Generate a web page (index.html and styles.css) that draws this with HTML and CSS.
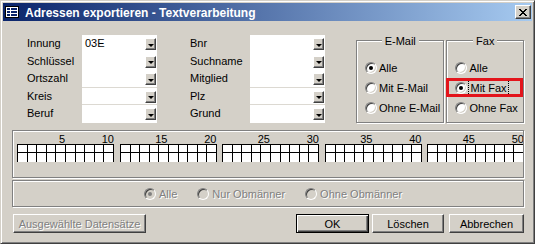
FILE: index.html
```html
<!DOCTYPE html>
<html lang="de">
<head>
    <meta charset="UTF-8">
    <title>Adressen exportieren - Textverarbeitung</title>
    <link rel="stylesheet" href="styles.css">
</head>
<body>
<div class="window">
    <div class="titlebar">
        <svg class="app-icon" width="16" height="16" viewBox="0 0 16 16">
            <rect x="1.5" y="2.5" width="13" height="11" fill="#fff" stroke="#000"/>
            <path d="M3 4h3v2H3zM7 4h6v2H7zM3 7h3v2H3zM7 7h6v2H7zM3 10h3v2H3zM7 10h6v2H7z" fill="#0a246a"/>
        </svg>
        <span class="title">Adressen exportieren - Textverarbeitung</span>
        <div class="close">
            <svg width="8" height="7" viewBox="0 0 8 7" shape-rendering="crispEdges">
                <path d="M0 0h2v1H0zM6 0h2v1H6zM1 1h2v1H1zM5 1h2v1H5zM2 2h4v1H2zM3 3h2v1H3zM2 4h4v1H2zM1 5h2v1H1zM5 5h2v1H5zM0 6h2v1H0zM6 6h2v1H6z" fill="#000"/>
            </svg>
        </div>
    </div>

    <div class="content">
        <div class="top">
            <div class="fields">
                <span class="label">Innung</span>
                <div class="combo"><span class="value">03E</span><span class="drop"></span></div>
                <span class="label">Schlüssel</span>
                <div class="combo"><span class="value"></span><span class="drop"></span></div>
                <span class="label">Ortszahl</span>
                <div class="combo sep"><span class="value"></span><span class="drop"></span></div>
                <span class="label">Kreis</span>
                <div class="combo sep"><span class="value"></span><span class="drop"></span></div>
                <span class="label">Beruf</span>
                <div class="combo"><span class="value"></span><span class="drop"></span></div>
            </div>

            <div class="fields fields-2">
                <span class="label">Bnr</span>
                <div class="combo"><span class="value"></span><span class="drop"></span></div>
                <span class="label">Suchname</span>
                <div class="combo"><span class="value"></span><span class="drop"></span></div>
                <span class="label">Mitglied</span>
                <div class="combo sep"><span class="value"></span><span class="drop"></span></div>
                <span class="label">Plz</span>
                <div class="combo sep"><span class="value"></span><span class="drop"></span></div>
                <span class="label">Grund</span>
                <div class="combo"><span class="value"></span><span class="drop"></span></div>
            </div>

            <div class="group group-email">
                <div class="group-title"><span>E-Mail</span></div>
                <div class="option"><span class="radio checked"></span><span>Alle</span></div>
                <div class="option"><span class="radio"></span><span>Mit E-Mail</span></div>
                <div class="option"><span class="radio"></span><span>Ohne E-Mail</span></div>
            </div>

            <div class="group group-fax">
                <div class="group-title"><span>Fax</span></div>
                <div class="option"><span class="radio"></span><span>Alle</span></div>
                <div class="option"><span class="radio checked"></span><span class="focus">Mit Fax</span></div>
                <div class="option"><span class="radio"></span><span>Ohne Fax</span></div>
                <div class="highlight"></div>
            </div>
        </div>

        <div class="rulers">
            <div class="ruler">
                <div class="ruler-labels"><span>5</span><span>10</span></div>
                <svg width="97" height="18"><rect width="97" height="18" fill="#fff"/><path d="M0 .5H97M0 8.5H97M.5 0V18M10.5 0V18M19.5 0V18M29.5 0V18M38.5 0V18M48.5 0V18M58.5 0V18M67.5 0V18M77.5 0V18M86.5 0V18M96.5 0V18" stroke="#000"/></svg>
            </div>
            <div class="ruler">
                <div class="ruler-labels"><span>15</span><span>20</span></div>
                <svg width="97" height="18"><rect width="97" height="18" fill="#fff"/><path d="M0 .5H97M0 8.5H97M.5 0V18M10.5 0V18M19.5 0V18M29.5 0V18M38.5 0V18M48.5 0V18M58.5 0V18M67.5 0V18M77.5 0V18M86.5 0V18M96.5 0V18" stroke="#000"/></svg>
            </div>
            <div class="ruler">
                <div class="ruler-labels"><span>25</span><span>30</span></div>
                <svg width="97" height="18"><rect width="97" height="18" fill="#fff"/><path d="M0 .5H97M0 8.5H97M.5 0V18M10.5 0V18M19.5 0V18M29.5 0V18M38.5 0V18M48.5 0V18M58.5 0V18M67.5 0V18M77.5 0V18M86.5 0V18M96.5 0V18" stroke="#000"/></svg>
            </div>
            <div class="ruler">
                <div class="ruler-labels"><span>35</span><span>40</span></div>
                <svg width="97" height="18"><rect width="97" height="18" fill="#fff"/><path d="M0 .5H97M0 8.5H97M.5 0V18M10.5 0V18M19.5 0V18M29.5 0V18M38.5 0V18M48.5 0V18M58.5 0V18M67.5 0V18M77.5 0V18M86.5 0V18M96.5 0V18" stroke="#000"/></svg>
            </div>
            <div class="ruler">
                <div class="ruler-labels"><span>45</span><span>50</span></div>
                <svg width="97" height="18"><rect width="97" height="18" fill="#fff"/><path d="M0 .5H97M0 8.5H97M.5 0V18M10.5 0V18M19.5 0V18M29.5 0V18M38.5 0V18M48.5 0V18M58.5 0V18M67.5 0V18M77.5 0V18M86.5 0V18M96.5 0V18" stroke="#000"/></svg>
            </div>
        </div>

        <div class="obm">
            <div class="option"><span class="radio off checked"></span><span class="dim">Alle</span></div>
            <div class="option"><span class="radio off"></span><span class="dim">Nur Obmänner</span></div>
            <div class="option"><span class="radio off"></span><span class="dim">Ohne Obmänner</span></div>
        </div>

        <div class="actions">
            <button class="btn btn-selected dim">Ausgewählte Datensätze</button>
            <button class="btn btn-ok">OK</button>
            <button class="btn btn-clear">Löschen</button>
            <button class="btn btn-cancel">Abbrechen</button>
        </div>
    </div>
</div>
</body>
</html>
```

FILE: styles.css
```css
body {
    margin: 0;
    font: 11px "Liberation Sans", Arial, sans-serif;
    color: #000;
    background: #d4d0c8;
}

.window {
    width: 535px;
    height: 244px;
    box-sizing: border-box;
    border: 1px solid;
    border-color: #d4d0c8 #404040 #404040 #d4d0c8;
    box-shadow: inset 1px 1px #fff, inset -1px -1px #808080;
    padding: 2px;
    background: #d4d0c8;
    display: flex;
    flex-direction: column;
}

/* title bar */
.titlebar {
    height: 18px;
    flex: none;
    display: flex;
    align-items: center;
    background: linear-gradient(to right, #0a246a, #a6caf0);
    color: #fff;
}

.app-icon {
    margin-left: 1px;
    margin-right: 5px;
}

.title {
    font-weight: bold;
    font-size: 12px;
    padding-top: 1px;
}

.close {
    margin-left: auto;
    margin-right: 1px;
    width: 16px;
    height: 14px;
    box-sizing: border-box;
    border: 1px solid;
    border-color: #fff #404040 #404040 #fff;
    box-shadow: inset -1px -1px #808080;
    background: #d4d0c8;
    display: flex;
    align-items: center;
    justify-content: center;
}

.content {
    flex: 1;
    padding: 0 8px 0 9px;
    display: flex;
    flex-direction: column;
}

/* combo fields */
.top {
    display: flex;
    align-items: flex-start;
    margin-top: 14px;
}

.fields {
    display: grid;
    grid-template-columns: 55px 75px;
    grid-auto-rows: 17.5px;
    margin-left: 15px;
}

.fields-2 {
    grid-template-columns: 60px 75px;
    margin-left: 33px;
}

.label {
    line-height: 17.5px;
}

.combo {
    background: #fff;
    display: flex;
    align-items: flex-start;
}

.combo.sep {
    box-shadow: inset 0 -1px #dcd9d2;
}

.value {
    flex: 1;
    padding-left: 3px;
    line-height: 17.5px;
}

.drop {
    width: 11px;
    height: 12px;
    margin: 3px 1px 0 0;
    box-sizing: border-box;
    border: 1px solid;
    border-color: #fff #404040 #404040 #fff;
    box-shadow: inset -1px -1px #808080;
    background: #d4d0c8;
    display: flex;
    align-items: center;
    justify-content: center;
    padding-top: 2px;
}

.drop::after {
    content: "";
    width: 0;
    height: 0;
    border-left: 3px solid transparent;
    border-right: 3px solid transparent;
    border-top: 3px solid #000;
}

/* option groups */
.group {
    position: relative;
    margin-top: 5px;
    height: 83px;
    box-sizing: border-box;
    border: 1px solid #808080;
    box-shadow: inset 1px 1px #fff, 1px 1px #fff;
    padding: 16.5px 0 0 8px;
}

.group-email {
    width: 89px;
    margin-left: 31px;
}

.group-fax {
    width: 78px;
    margin-left: 2px;
}

.group-title {
    position: absolute;
    top: -6px;
    left: 0;
    right: 0;
    text-align: center;
    line-height: 12px;
}

.group-title span {
    background: #d4d0c8;
    padding: 0 3px;
}

.option {
    display: flex;
    align-items: center;
    gap: 2px;
    height: 20px;
}

.radio {
    flex: none;
    width: 12px;
    height: 12px;
    box-sizing: border-box;
    border-radius: 50%;
    border: 1px solid;
    border-color: #808080 #fff #fff #808080;
    box-shadow: inset 1px 1px #404040, inset -1px -1px #d4d0c8;
    background: #fff;
    display: flex;
    align-items: center;
    justify-content: center;
}

.radio.checked::after {
    content: "";
    width: 4px;
    height: 4px;
    border-radius: 50%;
    background: #000;
}

.radio.off {
    background: #d4d0c8;
}

.radio.off.checked::after {
    background: #808080;
}

.focus {
    outline: 1px dotted #000;
    padding: 1px 1px 1px 1px;
    line-height: 12px;
}

.highlight {
    position: absolute;
    left: -1px;
    top: 37px;
    width: 77px;
    height: 19px;
    box-sizing: border-box;
    border: 3px solid #e3141b;
}

/* rulers */
.rulers {
    margin-top: 7px;
    height: 48px;
    box-sizing: border-box;
    border: 1px solid #808080;
    box-shadow: inset 1px 1px #fff, 1px 1px #fff;
    display: flex;
    gap: 5.5px;
    padding: 4px 0 0 4px;
    overflow: hidden;
}

.ruler {
    flex: none;
    width: 97px;
}

.ruler svg {
    display: block;
}

.ruler-labels {
    display: flex;
    height: 9px;
    line-height: 9px;
}

.ruler-labels span {
    width: 48px;
    text-align: right;
}

.ruler-labels span + span {
    width: 49px;
}

/* Obmänner */
.obm {
    margin-top: 2px;
    height: 27px;
    box-sizing: border-box;
    border: 1px solid #808080;
    box-shadow: inset 1px 1px #fff, 1px 1px #fff;
    display: flex;
    align-items: center;
    gap: 20px;
    padding-left: 131px;
}

.obm .option {
    gap: 3px;
}

.dim {
    color: #808080;
    text-shadow: 1px 1px #fff;
}

/* buttons */
.actions {
    margin-top: 7px;
    display: flex;
    padding-left: 1px;
}

.btn {
    height: 19px;
    box-sizing: border-box;
    border: 1px solid;
    border-color: #fff #404040 #404040 #fff;
    box-shadow: inset -1px -1px #808080;
    background: #d4d0c8;
    font: inherit;
    color: #000;
    padding: 0;
    margin: 0;
}

.btn.dim {
    color: #808080;
}

.btn-selected {
    width: 133px;
}

.btn-ok {
    width: 73px;
    margin-left: auto;
    border-color: #000;
    box-shadow: inset 1px 1px #fff, inset -1px -1px #404040, inset -2px -2px #808080;
}

.btn-clear {
    width: 72px;
    margin-left: 3px;
}

.btn-cancel {
    width: 75px;
    margin-left: 5px;
}
```
